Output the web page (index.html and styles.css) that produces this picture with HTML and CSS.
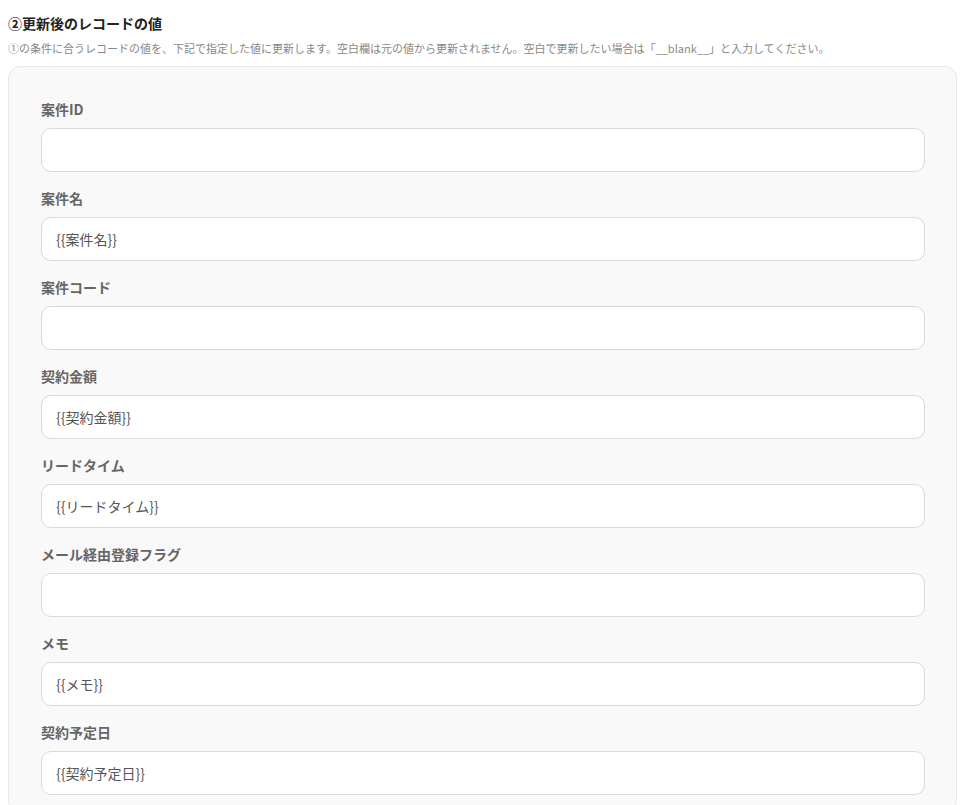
FILE: index.html
```html
<!doctype html>
<html>
<head>
	<meta charset="utf-8">
	<title>更新後のレコードの値</title>
	<link rel="stylesheet" href="styles.css">
</head>
<body>
	<div class="section">
		<h2 class="section-title">②更新後のレコードの値</h2>
		<p class="section-note">①の条件に合うレコードの値を、下記で指定した値に更新します。空白欄は元の値から更新されません。空白で更新したい場合は「__blank__」と入力してください。</p>
		<div class="panel">
			<div class="field">
				<label class="field-label">案件ID</label>
				<input class="field-input" type="text" value="">
			</div>
			<div class="field">
				<label class="field-label">案件名</label>
				<input class="field-input" type="text" value="{{案件名}}">
			</div>
			<div class="field">
				<label class="field-label">案件コード</label>
				<input class="field-input" type="text" value="">
			</div>
			<div class="field">
				<label class="field-label">契約金額</label>
				<input class="field-input" type="text" value="{{契約金額}}">
			</div>
			<div class="field">
				<label class="field-label">リードタイム</label>
				<input class="field-input" type="text" value="{{リードタイム}}">
			</div>
			<div class="field">
				<label class="field-label">メール経由登録フラグ</label>
				<input class="field-input" type="text" value="">
			</div>
			<div class="field">
				<label class="field-label">メモ</label>
				<input class="field-input" type="text" value="{{メモ}}">
			</div>
			<div class="field">
				<label class="field-label">契約予定日</label>
				<input class="field-input" type="text" value="{{契約予定日}}">
			</div>
		</div>
	</div>
</body>
</html>
```

FILE: styles.css
```css
body
{
	margin:0;
	background-color:#fff;
	font-family:"Noto Sans CJK JP","Noto Sans",sans-serif;
	color:#333;
}
.section
{
	padding:12px 16px 0 8px;
}
.section-title
{
	margin:0;
	font-size:14px;
	line-height:22px;
	font-weight:bold;
	color:#222;
}
.section-note
{
	margin:5px 0 0 0;
	font-size:11px;
	line-height:18px;
	color:#888;
}
.panel
{
	margin-top:9px;
	padding:32px 31px 0 32px;
	background-color:#f9f9f9;
	border:1px solid #e6e8ec;
	border-radius:12px;
}
.field
{
	display:flex;
	flex-direction:column;
	margin-bottom:16px;
}
.field-label
{
	font-size:14px;
	line-height:20px;
	font-weight:bold;
	color:#666;
	margin-bottom:9px;
}
.field-input
{
	box-sizing:border-box;
	height:44px;
	padding:0 14px;
	border:1px solid #d6d9de;
	border-radius:10px;
	background-color:#fff;
	font-family:inherit;
	font-size:14px;
	color:#555;
	outline:none;
}
```
